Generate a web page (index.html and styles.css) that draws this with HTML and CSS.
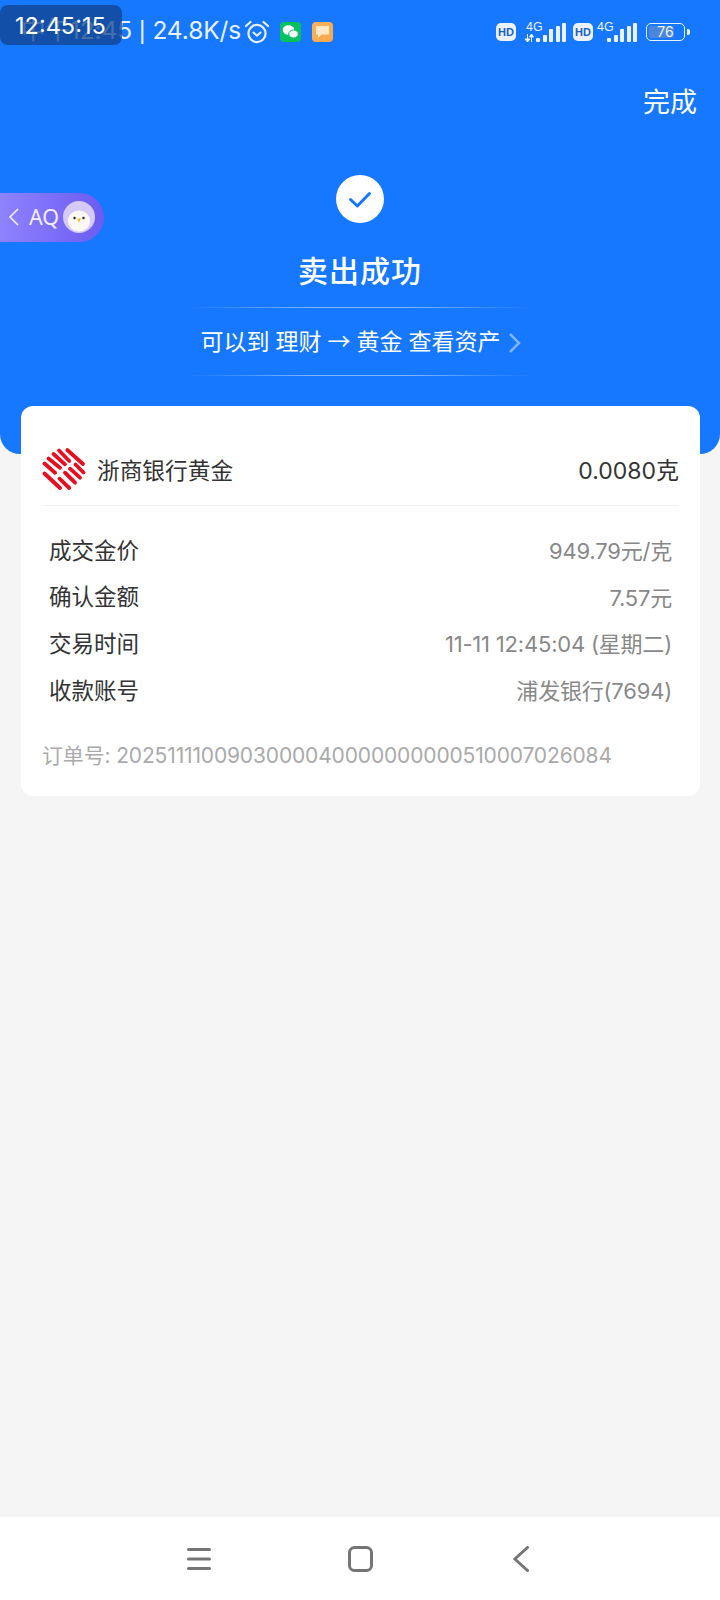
FILE: index.html
```html
<!DOCTYPE html>
<html lang="zh-CN">
<head>
    <meta charset="UTF-8">
    <title>卖出成功</title>
    <link rel="stylesheet" href="styles.css">
</head>
<body>
<div class="page">
    <div class="top">
        <div class="status">
            <span class="status-text">中午12:45 <span class="sep">|</span> 24.8K/s</span>
            <svg class="ic-alarm" width="26" height="24" viewBox="0 0 26 24">
                <circle cx="13" cy="13.500" r="8.600" fill="none" stroke="#e8f1ff" stroke-width="2.200"/>
                <path d="M9.500 12.500l3.500 3.200 3.500-3.200" fill="none" stroke="#e8f1ff" stroke-width="2" stroke-linecap="round" stroke-linejoin="round"/>
                <path d="M2 6L6.500 2M24 6L19.500 2" stroke="#e8f1ff" stroke-width="2.200" stroke-linecap="round"/>
            </svg>
            <span class="app app-wechat">
                <svg width="21" height="20" viewBox="0 0 21 20">
                    <ellipse cx="8.500" cy="8" rx="5.800" ry="4.800" fill="#fff"/>
                    <ellipse cx="13.500" cy="12" rx="4.800" ry="4" fill="#fff" stroke="#07c160"/>
                </svg>
            </span>
            <span class="app app-note">
                <svg width="21" height="20" viewBox="0 0 21 20">
                    <path d="M4 4h13v8.500H9.500L6 16v-3.500H4z" fill="#ffe9c6"/>
                </svg>
            </span>
            <div class="status-right">
                <span class="hd">HD</span>
                <span class="signal signal-first">
                    <i class="net">4G</i>
                    <svg class="arrows" width="9" height="8" viewBox="0 0 9 8">
                        <path d="M2.500 0v8M0 5l2.500 3L5 5zM6.500 8V0M4.500 3l2-3 2 3z" stroke="#eaf2ff" fill="#eaf2ff"/>
                    </svg>
                    <i class="bar b1"></i><i class="bar b2"></i><i class="bar b3"></i><i class="bar b4"></i><i class="bar b5"></i>
                </span>
                <span class="hd">HD</span>
                <span class="signal signal-second">
                    <i class="net">4G</i>
                    <i class="bar b1"></i><i class="bar b2"></i><i class="bar b3"></i><i class="bar b4"></i><i class="bar b5"></i>
                </span>
                <span class="battery"><span class="level"></span><span class="level-num">76</span></span>
                <span class="battery-tip"></span>
            </div>
        </div>
        <div class="done-row">完成</div>
        <div class="result">
            <svg class="check" width="48" height="48" viewBox="0 0 48 48">
                <circle cx="24" cy="24" r="24" fill="#fff"/>
                <path d="M14.500 24.500l6.800 6.500L33.500 18.500" fill="none" stroke="#1677ff" stroke-width="3" stroke-linecap="round" stroke-linejoin="round"/>
            </svg>
            <div class="title">卖出成功</div>
            <div class="hint">
                <span>可以到 理财 → 黄金 查看资产</span>
                <svg class="hint-arrow" width="14" height="22" viewBox="0 0 14 22">
                    <path d="M2 2l9 9-9 9" fill="none" stroke="#7fb2ff" stroke-width="2.500"/>
                </svg>
            </div>
        </div>
    </div>

    <div class="card">
        <div class="head">
            <svg class="logo" width="44" height="44" viewBox="0 0 44 44">
                <g stroke="#e60e1f" stroke-width="3.800" stroke-linecap="round">
                    <path d="M25.300 3L41 17"/>
                    <path d="M17 3.500L27.300 14"/>
                    <path d="M11.500 7L23 17.300"/>
                    <path d="M6.500 11.500L18 20.700"/>
                    <path d="M2.500 16.500L13 25.700"/>
                    <path d="M2.500 26.500L18 41"/>
                    <path d="M33.500 17.500L41.500 25.500"/>
                    <path d="M28 21.700L38 30.700"/>
                    <path d="M23 25.700L33 35.700"/>
                    <path d="M17.500 31.700L27.300 41"/>
                </g>
            </svg>
            <span class="name">浙商银行黄金</span>
            <span class="weight">0.0080克</span>
        </div>
        <div class="rows">
            <div class="row"><span>成交金价</span><span class="val">949.79元/克</span></div>
            <div class="row"><span>确认金额</span><span class="val">7.57元</span></div>
            <div class="row"><span>交易时间</span><span class="val">11-11 12:45:04 (星期二)</span></div>
            <div class="row"><span>收款账号</span><span class="val">浦发银行(7694)</span></div>
        </div>
        <div class="order">订单号: 2025111100903000040000000000510007026084</div>
    </div>

    <div class="spacer"></div>

    <div class="nav">
        <svg width="24" height="26" viewBox="0 0 24 26">
            <path d="M1.500 3.500h21M1.500 13h21M1.500 22.500h21" stroke="#757575" stroke-width="3" stroke-linecap="round"/>
        </svg>
        <svg width="25" height="26" viewBox="0 0 25 26">
            <rect x="1.500" y="1.500" width="22" height="23" rx="5" fill="none" stroke="#757575" stroke-width="3"/>
        </svg>
        <svg class="nav-back" width="16" height="26" viewBox="0 0 16 26">
            <path d="M14.500 1.500L1.800 13l12.700 11.500" fill="none" stroke="#757575" stroke-width="3" stroke-linecap="round" stroke-linejoin="round"/>
        </svg>
    </div>
</div>

<div class="clock">12:45:15</div>
<div class="float-pill">
    <svg class="pill-back" width="12" height="20" viewBox="0 0 12 20">
        <path d="M10 2L2 10l8 8" fill="none" stroke="#f2edff" stroke-width="1.600"/>
    </svg>
    <span>AQ</span>
    <svg class="avatar" width="32" height="32" viewBox="0 0 32 32">
        <circle cx="16" cy="16" r="16" fill="#d4caf5"/>
        <ellipse cx="16" cy="20" rx="11" ry="10.500" fill="#fbf8f3"/>
        <circle cx="11.500" cy="17" r="1.200" fill="#222"/>
        <circle cx="20.500" cy="17" r="1.200" fill="#222"/>
        <path d="M14 17.500h4l-2 4z" fill="#f5c022"/>
    </svg>
</div>
</body>
</html>
```

FILE: styles.css
```css
* {
    margin: 0;
    padding: 0;
    box-sizing: border-box;
}

html, body {
    width: 720px;
    height: 1600px;
    overflow: hidden;
}

body {
    position: relative;
    background: #f5f5f5;
    font-family: "Noto Sans", "Noto Sans CJK SC", sans-serif;
}

.page {
    display: flex;
    flex-direction: column;
    height: 1600px;
}

.top {
    height: 454px;
    background: #1677ff;
    border-radius: 0 0 20px 20px;
    color: #fff;
}

.status {
    display: flex;
    align-items: center;
    height: 32px;
    margin-top: 16px;
    padding: 0 30px 0 21px;
    color: #e8f1ff;
}

.status-text {
    padding-bottom: 2px;
    font-family: Inter, "Noto Sans CJK SC", sans-serif;
    font-size: 24.500px;
    line-height: 30px;
    white-space: nowrap;
    letter-spacing: -0.100px;
}

.sep {
    font-size: 20px;
    font-weight: 500;
}

.ic-alarm {
    margin-left: 3px;
}

.app {
    display: flex;
    width: 21px;
    height: 20px;
    border-radius: 4px;
}

.app-wechat {
    margin-left: 10px;
    background: #07c160;
}

.app-note {
    margin-left: 11px;
    background: linear-gradient(135deg, #fbb45c, #f8a64a);
}

.status-right {
    display: flex;
    align-items: flex-end;
    height: 20px;
    margin-left: auto;
}

.hd {
    width: 20px;
    height: 18px;
    margin-bottom: 1px;
    border-radius: 5px;
    background: #eaf2ff;
    color: #1a5fc4;
    font: bold 11px/18px "Liberation Sans", sans-serif;
    text-align: center;
}

.signal {
    position: relative;
    display: flex;
    align-items: flex-end;
    justify-content: flex-end;
    gap: 2.500px;
    margin-left: 4px;
    height: 20px;
}

.signal-first {
    width: 46px;
    margin-right: 7px;
}

.signal-second {
    width: 40px;
    margin-right: 9px;
}

.signal i {
    display: block;
    font-style: normal;
}

.net {
    position: absolute;
    top: -1px;
    left: 6px;
    color: #eaf2ff;
    font: 12.500px/12px "Liberation Sans", sans-serif;
}

.signal-second .net {
    left: 0;
}

.arrows {
    position: absolute;
    bottom: 0;
    left: 5px;
}

.bar {
    width: 4px;
    border-radius: 1px;
    background: #eaf2ff;
}

.b1 { height: 4px; }
.b2 { height: 7px; }
.b3 { height: 13px; }
.b4 { height: 16px; }
.b5 { height: 19px; }

.battery {
    position: relative;
    width: 39px;
    height: 18px;
    margin-bottom: 1px;
    padding: 2px;
    border: 1.500px solid #eaf2ff;
    border-radius: 5px;
}

.level {
    display: block;
    width: 76%;
    height: 100%;
    border-radius: 2px;
    background: #4b86dd;
}

.level-num {
    position: absolute;
    top: 0;
    left: 0;
    width: 100%;
    color: #eaf2ff;
    font: 14px/15px Inter, sans-serif;
    text-align: center;
}

.battery-tip {
    width: 3px;
    height: 6px;
    margin: 0 0 7px 2px;
    border-radius: 0 2px 2px 0;
    background: #eaf2ff;
}

.done-row {
    margin-top: 36px;
    padding-right: 23px;
    font-size: 27px;
    line-height: 36px;
    text-align: right;
}

.result {
    display: flex;
    flex-direction: column;
    align-items: center;
    width: 720px;
    margin-top: 55px;
}

.check {
    display: block;
}

.title {
    margin-top: 26px;
    font-size: 30px;
    font-weight: 500;
    line-height: 44px;
    letter-spacing: 1px;
}

.hint {
    display: flex;
    align-items: center;
    justify-content: center;
    gap: 8px;
    width: 340px;
    height: 69px;
    margin-top: 14px;
    padding: 0 0 4px 3px;
    font-size: 23px;
    border-style: solid;
    border-width: 1px 0;
    border-image: linear-gradient(90deg, rgba(255, 255, 255, 0), rgba(255, 255, 255, 0.45) 35%, rgba(255, 255, 255, 0.45) 65%, rgba(255, 255, 255, 0)) 1;
}

.hint-arrow {
    margin-top: 6px;
}

.card {
    position: relative;
    width: 679px;
    height: 390px;
    margin: -48px 0 0 21px;
    padding: 0 21px;
    background: #fff;
    border-radius: 12px;
}

.head {
    display: flex;
    align-items: center;
    height: 100px;
    padding-top: 27px;
    border-bottom: 1px solid #f1f1f1;
}

.logo {
    flex: none;
    margin-right: 11px;
}

.name {
    font-size: 22.700px;
    color: #333;
}

.weight {
    margin-left: auto;
    font-family: Inter, "Noto Sans CJK SC", sans-serif;
    font-size: 23px;
    color: #333;
}

.rows {
    padding: 20px 7px 0;
}

.row {
    display: flex;
    justify-content: space-between;
    align-items: center;
    height: 46.600px;
    font-size: 22.500px;
    color: #333;
}

.val {
    font-family: Inter, "Noto Sans CJK SC", sans-serif;
    font-size: 22px;
    color: #888;
    letter-spacing: -0.200px;
}

.order {
    margin-top: 29px;
    font-family: Inter, "Noto Sans CJK SC", sans-serif;
    font-size: 21px;
    line-height: 30px;
    color: #aaa;
    white-space: nowrap;
    letter-spacing: -0.150px;
}

.spacer {
    flex: 1;
}

.nav {
    display: flex;
    align-items: center;
    justify-content: center;
    gap: 137px;
    height: 83px;
    padding-right: 4px;
    background: #fff;
}

.nav-back {
    margin-left: 3px;
}

.clock {
    position: absolute;
    top: 5px;
    left: 0;
    width: 122px;
    height: 40px;
    padding-left: 15px;
    border-radius: 8px;
    background: rgba(16, 66, 140, 0.75);
    color: #fff;
    font: 23.500px/42px Inter, sans-serif;
}

.float-pill {
    position: absolute;
    top: 193px;
    left: 0;
    display: flex;
    align-items: center;
    width: 104px;
    height: 49px;
    padding-left: 8px;
    border-radius: 0 25px 25px 0;
    background: linear-gradient(90deg, #8f82ff, #6a5cf0);
    color: #f2edff;
    font: 21.500px "Noto Sans", sans-serif;
}

.pill-back {
    margin-bottom: 2px;
}

.float-pill span {
    margin-left: 9px;
    padding-bottom: 3px;
}

.avatar {
    margin: 0 0 2px 4px;
}
```
